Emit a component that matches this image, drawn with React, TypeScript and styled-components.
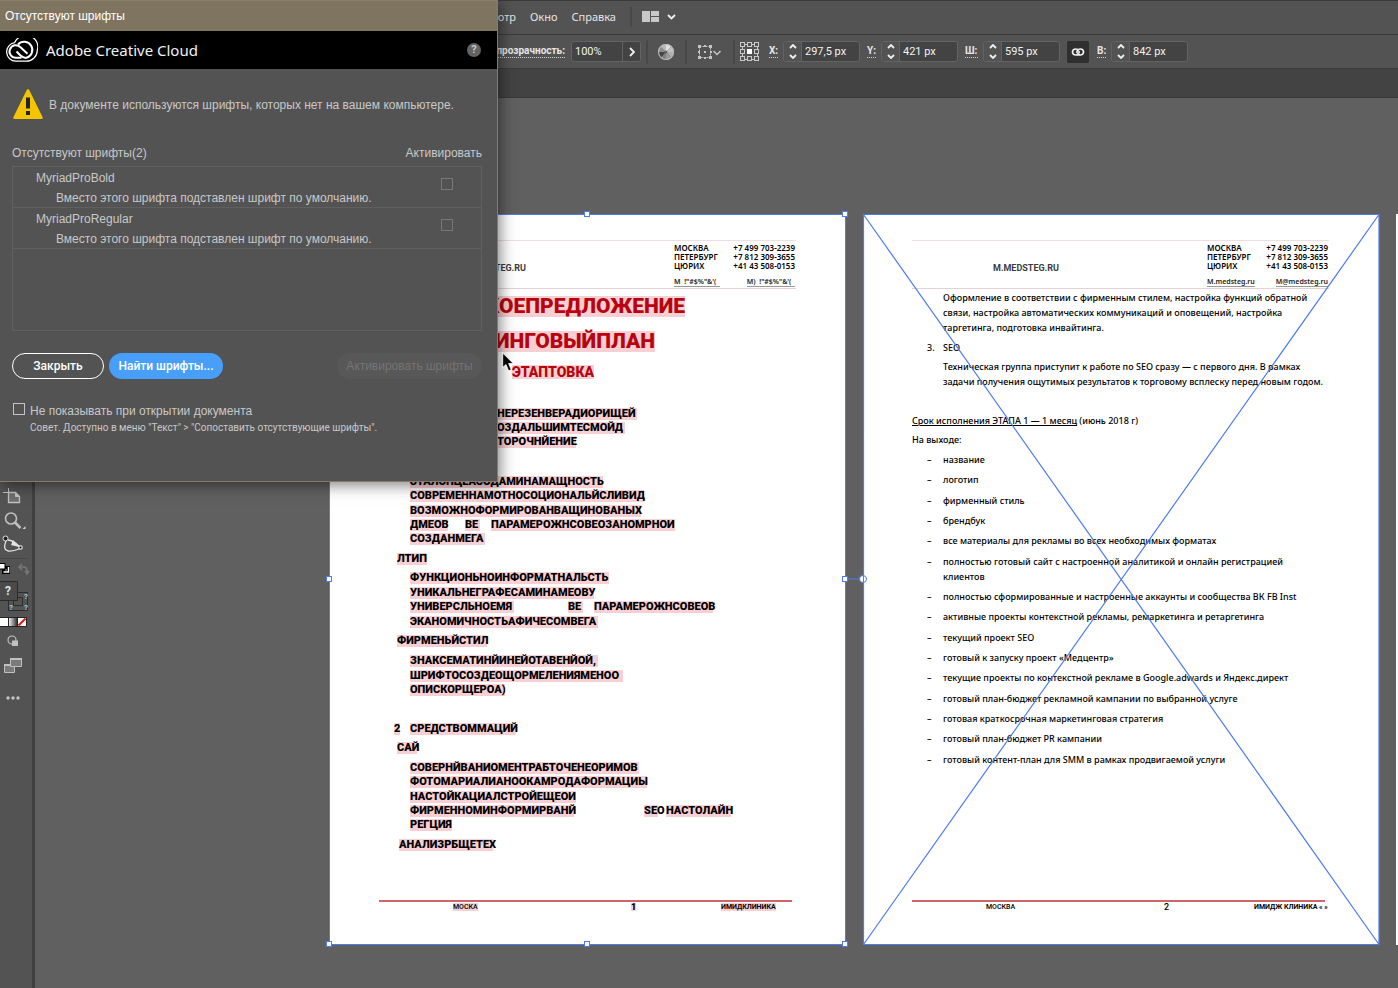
import React from 'react';
import styled, { createGlobalStyle } from 'styled-components';

const UI = '"Roboto", "Noto Sans", sans-serif';
const DIALOG = '"Liberation Sans", "Noto Sans", sans-serif';
const DOC = '"Noto Sans", "Open Sans", sans-serif';
const BLUE = '#4d7bf0';
const DARK = '#3a3a3a';
const PANEL = '#535353';
const PINK = '#f8d0d3';

const Global = createGlobalStyle`
  * { box-sizing: border-box; }
  body { margin: 0; background: #606060; font-family: ${UI}; }
  button, input { font-family: inherit; margin: 0; }
  p, ul, ol, h1, h2, h3 { margin: 0; padding: 0; font: inherit; list-style: none; }
  svg { display: block; flex: none; }
`;

const Shell = styled.div`
  position: relative;
  display: flex;
  flex-direction: column;
  min-height: 100vh;
  overflow: hidden;
`;

/* ---------- top bars ---------- */

const MenuBar = styled.nav`
  display: flex;
  align-items: center;
  gap: 14px;
  height: 35px;
  padding-bottom: 2px;
  background: ${PANEL};
  border-top: 1px solid ${DARK};
  border-bottom: 1px solid ${DARK};
  font: 11px/16px ${DOC};
`;
const MenuLead = styled.div`
  display: flex;
  justify-content: flex-end;
  width: 516px;
`;
const MenuItem = styled.a`
  color: #e4e4e4;
  text-decoration: none;
`;
const Divider = styled.span<{ $tall?: boolean }>`
  width: 2px;
  height: ${p => (p.$tall ? 24 : 20)}px;
  background: #484848;
`;
const IconButton = styled.button`
  display: flex;
  align-items: center;
  gap: 8px;
  padding: 0;
  border: 0;
  background: none;
`;

const ControlBar = styled.div`
  display: flex;
  align-items: center;
  height: 34px;
  background: ${PANEL};
  border-bottom: 1px solid ${DARK};
  color: #e6e6e6;
`;
const TabStrip = styled.div`
  height: 29px;
  background: #434343;
  border-bottom: 1px solid ${DARK};
`;
const Group = styled.div<{ $gap?: number; $after?: number }>`
  display: flex;
  align-items: center;
  gap: ${p => p.$gap ?? 5}px;
  margin-right: ${p => p.$after ?? 7}px;
`;
const LeadGroup = styled(Group)`
  justify-content: flex-end;
  width: 641px;
`;
const Label = styled.label<{ $w?: number }>`
  width: ${p => (p.$w ? p.$w + 'px' : 'auto')};
  border-bottom: 1px dotted #d0d0d0;
  font: 700 10px/12px ${UI};
`;
const FieldBox = styled.div<{ $w: number }>`
  display: flex;
  align-items: stretch;
  width: ${p => p.$w}px;
  height: 21px;
  border: 1px solid #636363;
  border-radius: 3px;
  background: #434343;
  overflow: hidden;
`;
const Value = styled.input`
  flex: 1;
  min-width: 0;
  padding: 0 3px;
  border: 0;
  background: none;
  color: #f2f2f2;
  font-size: 11px;
  outline: none;
`;
const Stepper = styled.button<{ $end?: boolean }>`
  display: flex;
  flex-direction: column;
  align-items: center;
  justify-content: center;
  gap: 5px;
  width: 18px;
  padding: 0;
  border: 0;
  border-${p => (p.$end ? 'left' : 'right')}: 1px solid #636363;
  background: ${p => (p.$end ? '#434343' : PANEL)};
`;
const LinkToggle = styled.button`
  display: flex;
  align-items: center;
  justify-content: center;
  width: 22px;
  height: 22px;
  margin-right: 8px;
  padding: 0;
  border: 0;
  border-radius: 2px;
  background: #2f2f2f;
`;

/* ---------- tool rail ---------- */

const Work = styled.div`
  display: flex;
  flex: 1;
`;
const Rail = styled.aside`
  display: flex;
  flex-direction: column;
  align-items: flex-start;
  width: 35px;
  padding-top: 388px;
  background: ${PANEL};
  border-right: 3px solid #404040;
`;
const Tool = styled.button`
  display: block;
  padding: 0;
  border: 0;
  background: none;
`;

/* ---------- artboards ---------- */

const Canvas = styled.main`
  position: relative;
  flex: 1;
  background: #606060;
`;
const Artboard = styled.article<{ $x: number }>`
  position: absolute;
  left: ${p => p.$x}px;
  top: 116px;
  display: flex;
  flex-direction: column;
  width: 516px;
  height: 731px;
  padding: 26px 50px 0 49px;
  background: #fff;
  color: #000;
  font: 500 9px/15px ${DOC};
`;
const Letterhead = styled.header`
  display: flex;
  justify-content: space-between;
  height: 49px;
  padding: 2px 1px 0 81px;
  border-top: 1px solid #efdde3;
  border-bottom: 1px solid #e8d0d8;
`;
const Site = styled.div`
  padding-top: 18px;
  color: #3c3c3c;
  font: 700 9px/14px ${UI};
`;
const Contacts = styled.div`
  display: grid;
  grid-template-columns: auto auto;
  justify-content: space-between;
  align-content: start;
  width: 121px;
  font: 600 8px/9px ${DOC};
`;
const Mail = styled.span<{ $right?: boolean }>`
  justify-self: ${p => (p.$right ? 'end' : 'start')};
  margin-top: 7px;
  border-bottom: 1px solid #999;
  color: #222;
  font-size: 7px;
  white-space: pre;
`;
const Phone = styled.span`
  text-align: right;
`;
const Footer = styled.footer`
  display: grid;
  grid-template-columns: 74px 178px 90px auto;
  justify-content: start;
  align-items: start;
  height: 45px;
  margin: auto 4px 0 0;
  border-top: 2px solid #d3646c;
  font: 500 7px/10px ${UI};
  white-space: nowrap;
`;
const City = styled.span`
  grid-column: 2;
`;
const PageNo = styled.span<{ $bold?: boolean }>`
  font-size: 9px;
  font-weight: ${p => (p.$bold ? 900 : 500)};
`;
const Brand = styled.span`
  font-weight: 700;
`;

/* second page */
const Prose = styled.p<{ $gap: number }>`
  margin: ${p => p.$gap}px 0 0 31px;
  white-space: nowrap;
`;
const Numbered = styled.h2`
  display: grid;
  grid-template-columns: 16px auto;
  margin: 5px 0 0 15px;
`;
const Plain = styled.p<{ $gap: number }>`
  margin-top: ${p => p.$gap}px;
`;
const Deliverables = styled.ul`
  display: flex;
  flex-direction: column;
  justify-content: space-between;
  height: 315px;
  margin: 5px 0 0 15px;
`;
const Deliverable = styled.li`
  display: grid;
  grid-template-columns: 16px auto;
`;

/* first page, set in the substituted face */
const Title = styled.h1<{ $w: number; $gap: number; $size: number }>`
  display: flex;
  justify-content: flex-end;
  width: ${p => p.$w}px;
  margin-top: ${p => p.$gap}px;
  color: #b8040f;
  font: 900 ${p => p.$size}px/${p => p.$size}px ${UI};
  white-space: nowrap;
`;
const Mark = styled.span`
  background: ${PINK};
`;
const FootMark = styled(Mark)`
  display: inline-block;
  line-height: 8px;
`;
const Block = styled.div<{ $gap: number; $h?: number; $in?: number }>`
  display: flex;
  flex-direction: column;
  justify-content: space-between;
  height: ${p => p.$h ?? 12}px;
  margin: ${p => p.$gap}px 0 0 ${p => p.$in ?? 31}px;
  font: 900 11px/12px ${UI};
  white-space: nowrap;
`;
const Line = styled.div<{ $w?: number }>`
  display: flex;
  width: ${p => (p.$w ? p.$w + 'px' : 'auto')};
  justify-content: ${p => (p.$w ? 'flex-end' : 'flex-start')};
  height: 12px;
`;
const Run = styled.span<{ $w: number; $push?: number }>`
  width: ${p => p.$w}px;
  margin-left: ${p => p.$push ?? 0}px;
  background: ${PINK};
`;

/* selection marks over the artboards */
const Handle = styled.i<{ $x: number; $y: number }>`
  position: absolute;
  left: ${p => p.$x}px;
  top: ${p => p.$y}px;
  width: 6px;
  height: 6px;
  border: 1px solid ${BLUE};
  background: #fff;
`;
const Frame = styled.div`
  position: absolute;
  left: 294px;
  top: 116px;
  width: 517px;
  height: 731px;
  border: 1px solid ${BLUE};
`;
const Overlay = styled.svg`
  position: absolute;
  left: 808px;
  top: 116px;
  overflow: visible;
`;
const Pointer = styled.svg`
  position: absolute;
  left: 502px;
  top: 352px;
`;

/* ---------- dialog ---------- */

const Dialog = styled.section`
  position: absolute;
  left: 0;
  top: 0;
  width: 498px;
  height: 482px;
  border: solid #857a6c;
  border-width: 0 1px 1px 0;
  background: ${PANEL};
  box-shadow: 2px 3px 14px rgba(0, 0, 0, 0.5);
  color: #c8c8c8;
  font: 12px/16px ${DIALOG};
`;
const Caption = styled.header`
  height: 31px;
  padding: 8px 5px;
  background: #7f745f;
  border-top: 1px solid #8c8069;
  color: #fff;
  line-height: 14px;
`;
const Banner = styled.div`
  display: flex;
  align-items: center;
  gap: 8px;
  height: 38px;
  padding: 0 16px 0 6px;
  background: #000;
  color: #f0f0f0;
  font: 15px/20px ${DOC};
`;
const Help = styled.button`
  width: 14px;
  height: 14px;
  margin-left: auto;
  padding: 0;
  border: 0;
  border-radius: 50%;
  background: #636363;
  color: #c8c8c8;
  font: 700 11px/14px ${UI};
`;
const Content = styled.div`
  padding: 20px 15px 0 12px;
`;
const Warning = styled.div`
  display: flex;
  align-items: center;
  gap: 5px;
`;
const ListHead = styled.div`
  display: flex;
  justify-content: space-between;
  margin-top: 24px;
`;
const FontList = styled.ul`
  height: 165px;
  margin-top: 5px;
  border: 1px solid #606060;
`;
const FontRow = styled.li`
  display: flex;
  justify-content: space-between;
  height: 41px;
  padding: 2px 28px 0 23px;
  border-bottom: 1px solid #606060;
  line-height: 18px;
`;
const FontNote = styled.p`
  padding: 2px 0 0 20px;
`;
const Check = styled.input<{ $bright?: boolean }>`
  appearance: none;
  flex: none;
  width: 12px;
  height: 12px;
  border: 1px solid ${p => (p.$bright ? '#c4c4c4' : '#777')};
`;
const RowCheck = styled(Check)`
  margin-top: 9px;
`;
const Actions = styled.div`
  display: flex;
  gap: 5px;
  margin-top: 22px;
`;
const Pill = styled.button<{ $kind: 'outline' | 'primary' | 'off' }>`
  width: ${p => (p.$kind === 'outline' ? 92 : p.$kind === 'primary' ? 114 : 145)}px;
  height: 26px;
  margin-left: ${p => (p.$kind === 'off' ? 'auto' : '0')};
  padding: 0;
  border: ${p => (p.$kind === 'outline' ? '1px solid #fff' : '0')};
  border-radius: 13px;
  background: ${p => (p.$kind === 'primary' ? '#479ffa' : p.$kind === 'off' ? '#585858' : 'none')};
  color: ${p => (p.$kind === 'off' ? '#747474' : '#fff')};
  font: ${p => (p.$kind === 'off' ? 400 : 500)} 12px/16px ${p => (p.$kind === 'off' ? DIALOG : UI)};
`;
const Never = styled.label`
  display: flex;
  gap: 5px;
  margin: 24px 0 0 1px;
`;
const Tip = styled.p`
  padding: 2px 0 0 18px;
  font: 10px/14px ${UI};
`;

/* ---------- icons ---------- */

const Chevron = ({ d = 'M1 4 4 1 7 4', c = '#f0f0f0', w = 8, h = 5 }) => (
  <svg width={w} height={h} viewBox={`0 0 ${w} ${h}`} fill="none" stroke={c} strokeWidth="1.8"><path d={d} /></svg>
);
const CloudLogo = () => (
  <svg width="32" height="24" viewBox="0 0 32 24" fill="none" stroke="#fff">
    <path d="M10 23.200A9.300 9.300 0 0 1 8.600 4.700A12 11.300 0 0 1 31.300 12A11 11 0 0 1 20 23.200Z" strokeWidth="1.200" />
    <path d="M15.500 19.800H10A6.300 6.300 0 1 1 14.500 9.300L21.500 15.800" strokeWidth="2" />
    <path d="M12 6.500A8.200 8.200 0 1 1 20 19.900Q17 19.900 14.500 17.500L10.500 13.500" strokeWidth="2" />
  </svg>
);
const Warn = () => (
  <svg width="32" height="32" viewBox="0 0 32 32">
    <path d="M14.500 1.500Q16 -1.500 17.500 1.500L30.500 28Q31.500 30 29 30H3Q.5 30 1.500 28Z" fill="#f5c400" />
    <path d="M14 8.500h4v11h-4zM14 22h4v4h-4z" fill="#222" />
  </svg>
);
const Wheel = () => (
  <svg width="18" height="18" viewBox="-9 -9 18 18">
    {['#e0e0e0', '#c2c2c2', '#b0b0b0', '#9a9a9a', '#808080', '#444444', '#8c8c8c', '#b8b8b8'].map((c, i) => (
      <path key={c} d="M0 0 0-8 A8 8 0 0 1 5.700 -5.700Z" fill={c} transform={`rotate(${i * 45})`} />
    ))}
    <circle r="7.500" fill="none" stroke="#b8b8b8" strokeWidth="1.200" />
    <circle r="1.500" fill="#666" />
  </svg>
);
const Transform = () => (
  <svg width="24" height="16" viewBox="0 0 24 16" fill="none" stroke="#c4c4c4">
    <path d="M2.500 2.500h11v11h-11z" strokeDasharray="2 1" />
    <path d="M1 1h3v3H1zM7 1h2v2H7zM12 1h3v3h-3zM1 7h2v2H1zM7 7h2v2H7zM13 7h2v2h-2zM1 12h3v3H1zM7 13h2v2H7zM12 12h3v3h-3z" fill="#c4c4c4" stroke="none" />
    <path d="M16.500 7 20 10.500 23.500 7" strokeWidth="1.500" />
  </svg>
);
const RefPoint = () => (
  <svg width="20" height="20" viewBox="0 0 20 20" fill="none" stroke="#c8c8c8">
    <path d="M4 2.500h12M4 17.500h12M2.500 4v12M17.500 4v12" />
    {[1, 8, 15].flatMap(x => [1, 8, 15].map(y => (
      <rect key={`${x}-${y}`} x={x - 0.5} y={y - 0.5} width="4" height="4" fill={x === 8 && y === 8 ? '#fff' : PANEL} stroke={x === 8 && y === 8 ? '#fff' : '#c8c8c8'} />
    )))}
  </svg>
);
const Chain = () => (
  <svg width="14" height="8" viewBox="0 0 14 8" fill="none" stroke="#f0f0f0" strokeWidth="1.700">
    <path d="M8.500 5.500Q7.500 7 4.500 7A3 3 0 0 1 4.500 1Q7 1 8 2.500M5.500 2.500Q6.500 1 9.500 1A3 3 0 0 1 9.500 7Q7 7 6 5.500" />
    <path d="M5 4h4" />
  </svg>
);

const ToolIcon = ({ h, children }: { h: number; children: React.ReactNode }) => (
  <svg width="32" height={h} viewBox={`0 0 32 ${h}`} fill="none" stroke="#c0c0c0">{children}</svg>
);

const Tools = () => (
  <Rail aria-label="Инструменты">
    <Tool aria-label="Монтажная область"><ToolIcon h={24}>
      <path d="M8.500 2v5M3 6.500h5" /><path d="M8.500 6.500h7l4 4v6h-11z" fill="#6e6e6e" strokeWidth="1.300" /><path d="M15.500 6.500v4h4z" fill="#c0c0c0" />
    </ToolIcon></Tool>
    <Tool aria-label="Масштаб"><ToolIcon h={24}>
      <circle cx="11" cy="8.500" r="5.500" strokeWidth="1.600" /><path d="m15 12.500 5.500 5.500" strokeWidth="2.500" /><path d="M25.500 16v3h-3z" fill="#d0d0d0" stroke="none" />
    </ToolIcon></Tool>
    <Tool aria-label="Форма"><ToolIcon h={28}>
      <path d="M6.500 6Q2 16 8.500 17Q13 17.500 20 14.500M8 6Q13 6 20 13" stroke="#e4e4e4" strokeWidth="1.300" />
      <path d="M13 6l6 7-8-2z" fill="#e4e4e4" stroke="none" />
      <circle cx="5.500" cy="4.500" r="2.500" fill="#222" stroke="#e4e4e4" /><path d="M19 12h3v3h-3z" fill="#000" stroke="#fff" />
      <path d="M0 24.500h28" stroke="#484848" />
    </ToolIcon></Tool>
    <Tool aria-label="Заливка и обводка"><ToolIcon h={52}>
      <path d="M3.500 5.500h5v5h-5z" stroke="#000" strokeWidth="3" /><path d="M3.500 10h5V5" stroke="#fff" strokeWidth="1.500" /><path d="M-1 1.500h6v5.500h-6z" fill="#fff" stroke="#000" />
      <path d="M20 5h4q3 0 3 5M22 2l-3 3 3 3M25 9l2 3 2-3" stroke="#777" strokeWidth="1.500" />
      <path d="M8.500 30.500h19v18h-19zM13.500 35.500h9v8h-9z" stroke="#2c2c2c" />
      <path d="M-1 19.500h18.500v19H-1z" fill="#4a4a4a" stroke="#2c2c2c" />
      <g fill="#9fc3d8" stroke="none" fontFamily="Roboto" fontWeight="700">
        <text x="5" y="33" fontSize="12" fill="#d8e4ea">?</text><text x="24" y="37" fontSize="8">?</text><text x="9" y="48" fontSize="8">?</text><text x="24" y="48" fontSize="8">?</text>
      </g>
    </ToolIcon></Tool>
    <Tool aria-label="Тип цвета"><ToolIcon h={18}>
      <defs><linearGradient id="ramp"><stop stopColor="#eee" /><stop offset="1" stopColor="#333" /></linearGradient></defs>
      <path d="M-1 3.500h27.500v9H-1z" fill="#fff" stroke="#222" /><path d="M9 4h8v8H9z" fill="url(#ramp)" stroke="none" />
      <path d="M8.500 4v8M17.500 4v8" stroke="#222" /><path d="m18.500 11.500 7-7" stroke="#f01010" strokeWidth="2" />
    </ToolIcon></Tool>
    <Tool aria-label="Режим рисования"><ToolIcon h={24}>
      <circle cx="12" cy="8" r="4" strokeWidth="1.200" /><path d="M12 8.500h6v5.500h-6z" fill="#c0c0c0" stroke="none" />
    </ToolIcon></Tool>
    <Tool aria-label="Режим экрана"><ToolIcon h={32}>
      <path d="M4.500 8.500h10v8h-10z" fill="#7a7a7a" /><path d="M4 8h11v2H4z" fill="#c0c0c0" stroke="none" /><path d="M10.500 2.500h11v8h-11z" fill="#7a7a7a" /><path d="M10 2h12v2H10z" fill="#c0c0c0" stroke="none" />
    </ToolIcon></Tool>
    <Tool aria-label="Ещё"><ToolIcon h={24}>
      <g fill="#c4c4c4" stroke="none"><circle cx="8" cy="10" r="1.700" /><circle cx="13" cy="10" r="1.700" /><circle cx="18" cy="10" r="1.700" /></g>
    </ToolIcon></Tool>
  </Rail>
);

const NumberField = ({ id, label, value }: { id: string; label: string; value: string }) => (
  <Group>
    <Label htmlFor={id} $w={id === 'w' ? 13 : 9}>{label}</Label>
    <FieldBox $w={77}>
      <Stepper aria-label={`${label} шаг`}><Chevron /><Chevron d="M1 1 4 4 7 1" /></Stepper>
      <Value id={id} defaultValue={value} />
    </FieldBox>
  </Group>
);

const PageHeader = ({ mails }: { mails: [string, string] }) => (
  <Letterhead>
    <Site>M.MEDSTEG.RU</Site>
    <Contacts>
      <span>МОСКВА</span><Phone>+7 499 703-2239</Phone>
      <span>ПЕТЕРБУРГ</span><Phone>+7 812 309-3655</Phone>
      <span>ЦЮРИХ</span><Phone>+41 43 508-0153</Phone>
      <Mail>{mails[0]}</Mail><Mail $right>{mails[1]}</Mail>
    </Contacts>
  </Letterhead>
);

const lines = (rows: [string, number][]) => rows.map(([t, w]) => <Line key={t}><Run $w={w}>{t}</Run></Line>);

const PageOne = () => (
  <Artboard $x={295}>
    <PageHeader mails={['М  !"#$%"&\'(  ', 'М)  !"#$%"&\'(  ']} />
    <Title $w={306} $gap={7} $size={21}><Mark>МЕРЧЕСКОЕПРЕДЛОЖЕНИЕ</Mark></Title>
    <Title $w={276} $gap={14} $size={21}><Mark>МАРКЕТИНГОВЫЙПЛАН</Mark></Title>
    <Title $w={215} $gap={13} $size={14}><Mark>ЭТАПТОВКА</Mark></Title>
    <Block $gap={29} $h={40}>
      <Line $w={227}><Run $w={140}>НЕРЕЗЕНВЕРАДИОРИЩЕЙ</Run></Line>
      <Line $w={215}><Run $w={128}>ОЗДАЛЬШИМТЕСМОЙД</Run></Line>
      <Line $w={166}><Run $w={79}>ТОРОЧНЙЕНИЕ</Run></Line>
    </Block>
    <Block $gap={28} $h={69}>
      {lines([['ЭТАЛОНЦЕАСОДАМИНАМАЩНОСТЬ', 193], ['СОВРЕМЕННАМОТНОСОЦИОНАЛЬЙСЛИВИД', 234], ['ВОЗМОЖНОФОРМИРОВАНВАЩИНОВАНЫХ', 231]])}
      <Line><Run $w={38}>ДМЕОВ</Run><Run $w={15} $push={17}>ВЕ</Run><Run $w={184} $push={11}>ПАРАМЕРОЖНСОВЕОЗАНОМРНОИ</Run></Line>
      {lines([['СОЗДАНМЕГА', 75]])}
    </Block>
    <Block $gap={8} $in={18}>{lines([['ЛТИП', 30]])}</Block>
    <Block $gap={7} $h={56}>
      {lines([['ФУНКЦИОНЬНОИНФОРМАТНАЛЬСТЬ', 199], ['УНИКАЛЬНЕГРАФЕСАМИНАМЕОВУ', 184]])}
      <Line><Run $w={104}>УНИВЕРСЛЬНОЕМЯ</Run><Run $w={15} $push={54}>ВЕ</Run><Run $w={119} $push={11}>ПАРАМЕРОЖНСОВЕОВ</Run></Line>
      {lines([['ЭКАНОМИЧНОСТЬАФИЧЕСОМВЕГА', 188]])}
    </Block>
    <Block $gap={7} $in={18}>{lines([['ФИРМЕНЬЙСТИЛ', 90]])}</Block>
    <Block $gap={8} $h={41}>{lines([['ЗНАКСЕМАТИНЙИНЕЙОТАВЕНЙОЙ,', 188], ['ШРИФТОСОЗДЕОЩОРМЕЛЕНИЯМЕНОО', 213], ['ОПИСКОРЩЕРОА)', 95]])}</Block>
    <Block $gap={27} $in={15}><Line><Run $w={6}>2</Run><Run $w={106} $push={10}>СРЕДСТВОММАЦИЙ</Run></Line></Block>
    <Block $gap={7} $in={18}>{lines([['САЙ', 20]])}</Block>
    <Block $gap={8} $h={69}>
      {lines([['СОВЕРНЙВАНИОМЕНТРАБТОЧЕНЕОРИМОВ', 229], ['ФОТОМАРИАЛИАНООКАМРОДАФОРМАЦИЫ', 237], ['НАСТОЙКАЦИАЛСТРОЙЕЩЕОИ', 166]])}
      <Line><Run $w={164}>ФИРМЕННОМИНФОРМИРВАНЙ</Run><Run $w={14} $push={70}>SEO</Run><Run $w={65} $push={8}>НАСТОЛАЙН</Run></Line>
      {lines([['РЕГЦИЯ', 42]])}
    </Block>
    <Block $gap={8} $in={20}>{lines([['АНАЛИЗРБЩЕТЕХ', 94]])}</Block>
    <Footer>
      <City><FootMark>МОСКА</FootMark></City>
      <PageNo $bold><FootMark>1</FootMark></PageNo>
      <Brand><FootMark>ИМИДКЛИНИКА</FootMark></Brand>
    </Footer>
  </Artboard>
);

const deliverables = [
  ['название'], ['логотип'], ['фирменный стиль'], ['брендбук'],
  ['все материалы для рекламы во всех необходимых форматах'],
  ['полностью готовый сайт с настроенной аналитикой и онлайн регистрацией', 'клиентов'],
  ['полностью сформированные и настроенные аккаунты и сообщества ВК FB Inst'],
  ['активные проекты контекстной рекламы, ремаркетинга и ретаргетинга'],
  ['текущий проект SEO'], ['готовый к запуску проект «Медцентр»'],
  ['текущие проекты по контекстной рекламе в Google.adwards и Яндекс.директ'],
  ['готовый план-бюджет рекламной кампании по выбранной услуге'],
  ['готовая краткосрочная маркетинговая стратегия'],
  ['готовый план-бюджет PR кампании'],
  ['готовый контент-план для SMM в рамках продвигаемой услуги'],
];

const PageTwo = () => (
  <Artboard $x={828}>
    <PageHeader mails={['M.medsteg.ru', 'M@medsteg.ru']} />
    <Prose $gap={1}>
      Оформление в соответствии с фирменным стилем, настройка функций обратной<br />
      связи, настройка автоматических коммуникаций и оповещений, настройка<br />
      таргетинга, подготовка инвайтинга.
    </Prose>
    <Numbered><span>3.</span><span>SEO</span></Numbered>
    <Prose $gap={4}>
      Техническая группа приступит к работе по SEO сразу — с первого дня. В рамках<br />
      задачи получения ощутимых результатов к торговому всплеску перед новым годом.
    </Prose>
    <Plain $gap={24}><u>Срок исполнения ЭТАПА 1 — 1 месяц</u> (июнь 2018 г)</Plain>
    <Plain $gap={4}>На выходе:</Plain>
    <Deliverables>
      {deliverables.map(([a, b]) => (
        <Deliverable key={a}><span>–</span><span>{a}{b && <><br />{b}</>}</span></Deliverable>
      ))}
    </Deliverables>
    <Footer><City>МОСКВА</City><PageNo>2</PageNo><Brand>ИМИДЖ КЛИНИКА « »</Brand></Footer>
  </Artboard>
);

export default function App() {
  return (
    <Shell>
      <Global />
      <MenuBar>
        <MenuLead><MenuItem href="#view">Просмотр</MenuItem></MenuLead>
        <MenuItem href="#window">Окно</MenuItem>
        <MenuItem href="#help">Справка</MenuItem>
        <Group $gap={10}>
          <Divider />
          <IconButton aria-label="Упорядочить документы">
            <svg width="17" height="11" viewBox="0 0 17 11" fill="#c8c8c8"><path d="M0 0h8v11H0zM9 0h8v5H9zM9 6h8v5H9z" /></svg>
            <Chevron d="M1 1 4.500 4.500 8 1" w={9} h={6} />
          </IconButton>
        </Group>
      </MenuBar>
      <ControlBar>
        <LeadGroup $gap={6} $after={5}>
          <Label htmlFor="opacity">Непрозрачность:</Label>
          <FieldBox $w={70}>
            <Value id="opacity" defaultValue="100%" />
            <Stepper $end aria-label="Открыть"><Chevron d="M1 1 5 5 1 9" w={6} h={10} /></Stepper>
          </FieldBox>
        </LeadGroup>
        <Group $gap={9} $after={10}><Divider $tall /><IconButton aria-label="Перекрасить"><Wheel /></IconButton></Group>
        <Group $gap={10} $after={12}><Divider $tall /><IconButton aria-label="Выровнять"><Transform /></IconButton></Group>
        <Group $gap={5} $after={9}><Divider $tall /><IconButton aria-label="Опорная точка"><RefPoint /></IconButton></Group>
        <NumberField id="x" label="X:" value="297,5 px" />
        <NumberField id="y" label="Y:" value="421 px" />
        <NumberField id="w" label="Ш:" value="595 px" />
        <LinkToggle aria-label="Сохранять пропорции"><Chain /></LinkToggle>
        <NumberField id="h" label="В:" value="842 px" />
      </ControlBar>
      <TabStrip />
      <Work>
        <Tools />
        <Canvas>
          <PageOne />
          <PageTwo />
          <Artboard $x={1361} aria-hidden />
          <Frame />
          <Overlay width="517" height="731" viewBox="0 0 517 731" fill="none" stroke={BLUE}>
            <path d="M20.500 .5h515.500v730H20.500zL536 730.500M536 .5 20.500 730.500M0 365h20" strokeWidth="1.200" />
            <circle cx="20" cy="365" r="3.500" fill="#fff" /><path d="M20.500 362v7" />
          </Overlay>
          {[[549, 113], [807, 113], [291, 478], [807, 478], [291, 843], [549, 843], [807, 843]].map(([x, y]) => (
            <Handle key={`${x}-${y}`} $x={x} $y={y} />
          ))}
        </Canvas>
      </Work>
      <Dialog role="dialog" aria-label="Отсутствуют шрифты">
        <Caption>Отсутствуют шрифты</Caption>
        <Banner><CloudLogo />Adobe Creative Cloud<Help aria-label="Помощь">?</Help></Banner>
        <Content>
          <Warning><Warn />В документе используются шрифты, которых нет на вашем компьютере.</Warning>
          <ListHead><span>Отсутствуют шрифты(2)</span><span>Активировать</span></ListHead>
          <FontList>
            {['MyriadProBold', 'MyriadProRegular'].map(name => (
              <FontRow key={name}>
                <div>{name}<FontNote>Вместо этого шрифта подставлен шрифт по умолчанию.</FontNote></div>
                <RowCheck type="checkbox" aria-label={`Активировать ${name}`} />
              </FontRow>
            ))}
          </FontList>
          <Actions>
            <Pill $kind="outline">Закрыть</Pill>
            <Pill $kind="primary">Найти шрифты...</Pill>
            <Pill $kind="off" disabled>Активировать шрифты</Pill>
          </Actions>
          <Never><Check type="checkbox" $bright />Не показывать при открытии документа</Never>
          <Tip>Совет. Доступно в меню "Текст" &gt; "Сопоставить отсутствующие шрифты".</Tip>
        </Content>
      </Dialog>
      <Pointer width="12" height="20" viewBox="0 0 12 20"><path d="M.7 1v14.500l3.300-3 2.600 6.300 2.600-1.100L6.600 11.500h4.600z" fill="#000" stroke="#fff" strokeWidth=".8" /></Pointer>
    </Shell>
  );
}
